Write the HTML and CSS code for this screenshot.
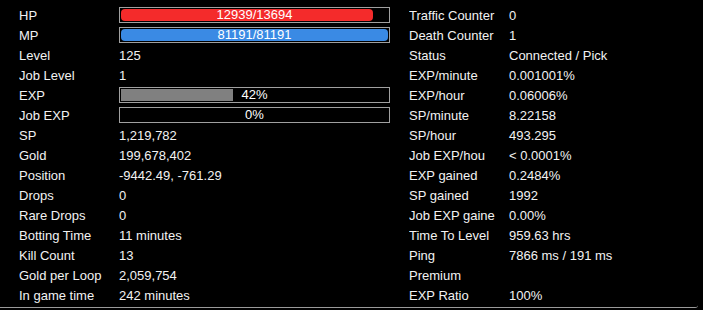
FILE: index.html
```html
<!DOCTYPE html>
<html lang="en">
<head>
    <meta charset="UTF-8">
    <title>Bot Stats</title>
    <link rel="stylesheet" href="styles.css">
</head>
<body>
    <div class="panel">
        <div class="col">
            <div class="row"><span class="label">HP</span>
                <div class="bar"><div class="fill hp" style="width: 94.5%"></div><span class="bar-text">12939/13694</span></div>
            </div>
            <div class="row"><span class="label">MP</span>
                <div class="bar"><div class="fill mp" style="width: 100%"></div><span class="bar-text">81191/81191</span></div>
            </div>
            <div class="row"><span class="label">Level</span><span class="value">125</span></div>
            <div class="row"><span class="label">Job Level</span><span class="value">1</span></div>
            <div class="row"><span class="label">EXP</span>
                <div class="bar"><div class="fill exp" style="width: 42%"></div><span class="bar-text">42%</span></div>
            </div>
            <div class="row"><span class="label">Job EXP</span>
                <div class="bar"><div class="fill exp" style="width: 0%"></div><span class="bar-text">0%</span></div>
            </div>
            <div class="row"><span class="label">SP</span><span class="value">1,219,782</span></div>
            <div class="row"><span class="label">Gold</span><span class="value">199,678,402</span></div>
            <div class="row"><span class="label">Position</span><span class="value">-9442.49, -761.29</span></div>
            <div class="row"><span class="label">Drops</span><span class="value">0</span></div>
            <div class="row"><span class="label">Rare Drops</span><span class="value">0</span></div>
            <div class="row"><span class="label">Botting Time</span><span class="value">11 minutes</span></div>
            <div class="row"><span class="label">Kill Count</span><span class="value">13</span></div>
            <div class="row"><span class="label">Gold per Loop</span><span class="value">2,059,754</span></div>
            <div class="row"><span class="label">In game time</span><span class="value">242 minutes</span></div>
        </div>
        <div class="col">
            <div class="row"><span class="label">Traffic Counter</span><span class="value">0</span></div>
            <div class="row"><span class="label">Death Counter</span><span class="value">1</span></div>
            <div class="row"><span class="label">Status</span><span class="value">Connected / Pick</span></div>
            <div class="row"><span class="label">EXP/minute</span><span class="value">0.001001%</span></div>
            <div class="row"><span class="label">EXP/hour</span><span class="value">0.06006%</span></div>
            <div class="row"><span class="label">SP/minute</span><span class="value">8.22158</span></div>
            <div class="row"><span class="label">SP/hour</span><span class="value">493.295</span></div>
            <div class="row"><span class="label">Job EXP/hou</span><span class="value">&lt; 0.0001%</span></div>
            <div class="row"><span class="label">EXP gained</span><span class="value">0.2484%</span></div>
            <div class="row"><span class="label">SP gained</span><span class="value">1992</span></div>
            <div class="row"><span class="label">Job EXP gaine</span><span class="value">0.00%</span></div>
            <div class="row"><span class="label">Time To Level</span><span class="value">959.63 hrs</span></div>
            <div class="row"><span class="label">Ping</span><span class="value">7866 ms / 191 ms</span></div>
            <div class="row"><span class="label">Premium</span><span class="value"></span></div>
            <div class="row"><span class="label">EXP Ratio</span><span class="value">100%</span></div>
        </div>
    </div>
</body>
</html>
```
FILE: styles.css
```css
body {
    margin: 0;
    background: #000;
    color: #f2f2f2;
    font-family: 'Liberation Sans', Arial, sans-serif;
    font-size: 13px;
}
.panel {
    width: 698px;
    height: 308px;
    display: flex;
    gap: 19px;
    padding: 5px 0 0 19px;
    box-sizing: border-box;
    border-bottom: 1px solid #9a9a9a;
    border-bottom-right-radius: 3px;
}
.col {
    display: flex;
    flex-direction: column;
}
.row {
    display: flex;
    align-items: center;
    height: 20px;
    flex-shrink: 0;
}
.label {
    width: 100px;
    white-space: nowrap;
    overflow: hidden;
}
.value {
    white-space: nowrap;
}
.bar {
    width: 271px;
    height: 16px;
    box-sizing: border-box;
    border: 1px solid #a0a0a0;
    padding: 1px;
    display: grid;
}
.fill,
.bar-text {
    grid-area: 1 / 1;
}
.fill {
    height: 100%;
}
.fill.hp {
    background: #f42b2b;
    border-radius: 4px;
}
.fill.mp {
    background: #3a8ae4;
    border-radius: 4px;
}
.fill.exp {
    background: #808080;
}
.bar-text {
    text-align: center;
    line-height: 12px;
    color: #fff;
}
```
